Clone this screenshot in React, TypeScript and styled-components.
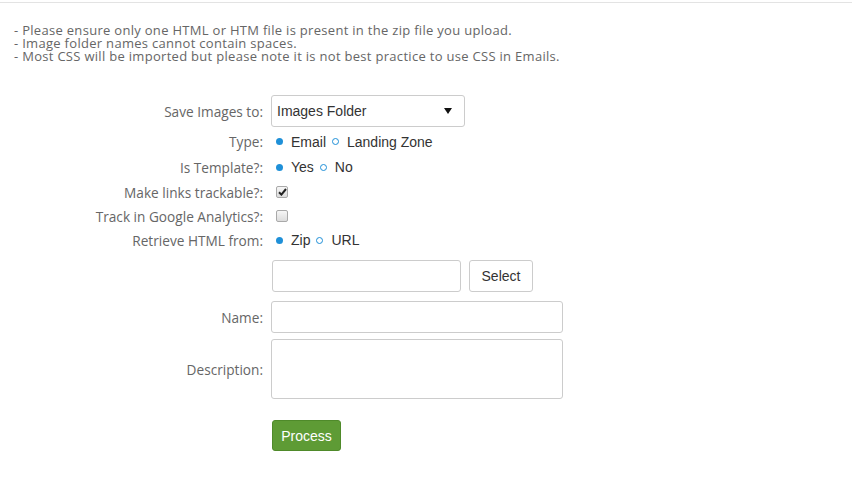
import React, { useState } from "react";
import styled, { createGlobalStyle } from "styled-components";

const GlobalStyle = createGlobalStyle`
  html, body {
    margin: 0;
    padding: 0;
    background: #ffffff;
  }
  body {
    font-family: "Open Sans", "Liberation Sans", sans-serif;
  }
`;

type Choice = { value: string; label: string };

const Radios = ({
  options,
  value,
  onChange,
}: {
  options: Choice[];
  value: string;
  onChange: (v: string) => void;
}) => (
  <RadioGroup>
    {options.map((o) => (
      <RadioOption key={o.value} onClick={() => onChange(o.value)}>
        <Dot $on={o.value === value} />
        {o.label}
      </RadioOption>
    ))}
  </RadioGroup>
);

const Tick = () => (
  <svg width="9" height="8" viewBox="0 0 9 8">
    <path d="M1 4.2 L3.4 6.6 L8 1" stroke="#222" strokeWidth="2" fill="none" />
  </svg>
);

const App = () => {
  const [type, setType] = useState("email");
  const [template, setTemplate] = useState("yes");
  const [source, setSource] = useState("zip");
  const [trackable, setTrackable] = useState(true);
  const [analytics, setAnalytics] = useState(false);

  return (
    <Wrapper>
      <GlobalStyle />
      <TopRule />
      <Notes>
        <div>- Please ensure only one HTML or HTM file is present in the zip file you upload.</div>
        <div>- Image folder names cannot contain spaces.</div>
        <div>- Most CSS will be imported but please note it is not best practice to use CSS in Emails.</div>
      </Notes>

      <Form>
        <Row $h={32} $top={0}>
          <Label>Save Images to:</Label>
          <SelectBox>
            <span>Images Folder</span>
            <svg width="8" height="6" viewBox="0 0 8 6">
              <path d="M0 0 H8 L4 6 Z" fill="#111" />
            </svg>
          </SelectBox>
        </Row>
        <Row $h={25} $top={2}>
          <Label>Type:</Label>
          <Radios
            value={type}
            onChange={setType}
            options={[
              { value: "email", label: "Email" },
              { value: "landing", label: "Landing Zone" },
            ]}
          />
        </Row>
        <Row $h={26} $top={0}>
          <Label>Is Template?:</Label>
          <Radios
            value={template}
            onChange={setTemplate}
            options={[
              { value: "yes", label: "Yes" },
              { value: "no", label: "No" },
            ]}
          />
        </Row>
        <Row $h={24} $top={0}>
          <Label>Make links trackable?:</Label>
          <Check $on={trackable} onClick={() => setTrackable(!trackable)}>
            {trackable && <Tick />}
          </Check>
        </Row>
        <Row $h={24} $top={0}>
          <Label>Track in Google Analytics?:</Label>
          <Check $on={analytics} onClick={() => setAnalytics(!analytics)}>
            {analytics && <Tick />}
          </Check>
        </Row>
        <Row $h={24} $top={0}>
          <Label>Retrieve HTML from:</Label>
          <Radios
            value={source}
            onChange={setSource}
            options={[
              { value: "zip", label: "Zip" },
              { value: "url", label: "URL" },
            ]}
          />
        </Row>
        <Row $h={32} $top={8}>
          <Label />
          <FileField />
          <SelectButton>Select</SelectButton>
        </Row>
        <Row $h={32} $top={9}>
          <Label>Name:</Label>
          <TextField />
        </Row>
        <Row $h={60} $top={6}>
          <Label>Description:</Label>
          <TextArea />
        </Row>
        <Row $h={31} $top={21}>
          <Label />
          <ProcessButton>Process</ProcessButton>
        </Row>
      </Form>
    </Wrapper>
  );
};

export default App;

const Wrapper = styled.div`
  width: 855px;
  height: 479px;
  position: relative;
  overflow: hidden;
`;

const TopRule = styled.div`
  margin-top: 2px;
  width: 852px;
  height: 1px;
  background: #e3e3e3;
`;

const Notes = styled.div`
  margin-top: 21px;
  padding-left: 14px;
  font-size: 13px;
  letter-spacing: 0.3px;
  line-height: 13px;
  color: #666666;
`;

const Form = styled.div`
  margin-top: 32px;
  display: flex;
  flex-direction: column;
`;

const Row = styled.div<{ $h: number; $top: number }>`
  display: flex;
  align-items: center;
  height: ${(p) => p.$h}px;
  margin-top: ${(p) => p.$top}px;
`;

const Label = styled.div`
  width: 263px;
  flex: none;
  margin-right: 8px;
  text-align: right;
  font-size: 13.65px;
  color: #666666;
  white-space: nowrap;
`;

const SelectBox = styled.div`
  box-sizing: border-box;
  width: 194px;
  height: 32px;
  border: 1px solid #cccccc;
  border-radius: 3px;
  display: flex;
  align-items: center;
  justify-content: space-between;
  padding: 0 12px 0 5px;
  font-family: "Liberation Sans", Arial, sans-serif;
  font-size: 14px;
  color: #333333;
`;

const RadioGroup = styled.div`
  display: flex;
  align-items: center;
  gap: 6px;
  font-family: "Liberation Sans", Arial, sans-serif;
  font-size: 14px;
  color: #333333;
  padding-left: 5px;
`;

const RadioOption = styled.label`
  display: flex;
  align-items: center;
  gap: 8px;
  cursor: pointer;
`;

const Dot = styled.span<{ $on: boolean }>`
  box-sizing: border-box;
  width: 7px;
  height: 7px;
  border-radius: 50%;
  background: ${(p) => (p.$on ? "#1f90d8" : "#ffffff")};
  border: ${(p) => (p.$on ? "none" : "1.5px solid #1f90d8")};
`;

const Check = styled.span<{ $on: boolean }>`
  box-sizing: border-box;
  margin-left: 5px;
  width: 12px;
  height: 12px;
  border: 1px solid #a9a9a9;
  border-radius: 2px;
  background: linear-gradient(#f6f6f6, #dcdcdc);
  display: flex;
  align-items: center;
  justify-content: center;
  cursor: pointer;
`;

const FileField = styled.input`
  box-sizing: border-box;
  width: 189px;
  height: 32px;
  margin-left: 1px;
  border: 1px solid #cccccc;
  border-radius: 3px;
  outline: none;
`;

const SelectButton = styled.button`
  box-sizing: border-box;
  margin-left: 8px;
  width: 64px;
  height: 32px;
  border: 1px solid #cccccc;
  border-radius: 3px;
  background: #ffffff;
  font-family: "Liberation Sans", Arial, sans-serif;
  font-size: 14px;
  color: #333333;
  padding: 0;
`;

const TextField = styled.input`
  box-sizing: border-box;
  width: 292px;
  height: 32px;
  border: 1px solid #cccccc;
  border-radius: 3px;
  outline: none;
`;

const TextArea = styled.textarea`
  box-sizing: border-box;
  width: 292px;
  height: 60px;
  border: 1px solid #cccccc;
  border-radius: 3px;
  outline: none;
  resize: none;
`;

const ProcessButton = styled.button`
  box-sizing: border-box;
  margin-left: 1px;
  width: 69px;
  height: 31px;
  border: 1px solid #4f8a2a;
  border-radius: 3px;
  background: #5e9b35;
  color: #ffffff;
  font-family: "Liberation Sans", Arial, sans-serif;
  font-size: 14px;
  padding: 0;
`;
